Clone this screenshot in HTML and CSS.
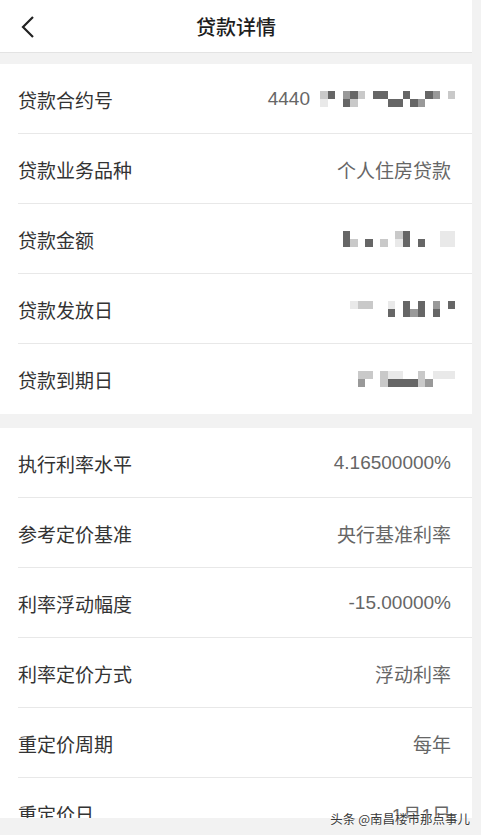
FILE: index.html
```html
<!DOCTYPE html>
<html lang="zh-CN">
	<head>
		<meta charset="UTF-8">
		<meta name="viewport" content="width=device-width, initial-scale=1.0">
		<title>贷款详情</title>
		<link rel="stylesheet" href="styles.css">
	</head>
	<body>
		<div class="page">
			<header class="topbar">
				<a class="back" href="#">
					<svg width="16" height="24" viewBox="0 0 16 24"><polyline points="13,2 3,12 13,22" fill="none" stroke="#222" stroke-width="2.2"/></svg>
				</a>
				<h1>贷款详情</h1>
			</header>

			<section class="card">
				<div class="row">
					<span class="label">贷款合约号</span>
					<span class="value">4440 <span class="mosaic" data-top="bd.cdb.dd..d..dc.b" data-bottom="a..db....dd.dc...."></span></span>
				</div>
				<div class="row">
					<span class="label">贷款业务品种</span>
					<span class="value">个人住房贷款</span>
				</div>
				<div class="row">
					<span class="label">贷款金额</span>
					<span class="value"><span class="mosaic" data-top="d......bd....aa" data-bottom="db.d.b.ad.d..aa"></span></span>
				</div>
				<div class="row">
					<span class="label">贷款发放日</span>
					<span class="value"><span class="mosaic" data-top="abb..a.d.d.c.d" data-bottom=".....d.dcd.d.."></span></span>
				</div>
				<div class="row">
					<span class="label">贷款到期日</span>
					<span class="value"><span class="mosaic" data-top="bb.baa..b.aaa" data-bottom="c..bddddbc..."></span></span>
				</div>
			</section>

			<section class="card">
				<div class="row">
					<span class="label">执行利率水平</span>
					<span class="value">4.16500000%</span>
				</div>
				<div class="row">
					<span class="label">参考定价基准</span>
					<span class="value">央行基准利率</span>
				</div>
				<div class="row">
					<span class="label">利率浮动幅度</span>
					<span class="value">-15.00000%</span>
				</div>
				<div class="row">
					<span class="label">利率定价方式</span>
					<span class="value">浮动利率</span>
				</div>
				<div class="row">
					<span class="label">重定价周期</span>
					<span class="value">每年</span>
				</div>
				<div class="row">
					<span class="label">重定价日</span>
					<span class="value">1月1日</span>
				</div>
			</section>
		</div>

		<div class="bottombar"></div>
		<div class="watermark">头条 @南昌楼市那点事儿</div>

		<script>
// masked values: two rows of blocks, one letter per block
const shades = { a: "#e9e9e9", b: "#c9c9c9", c: "#999", d: "#666" };

for (const m of document.querySelectorAll(".mosaic")) {
	const top = m.dataset.top;
	const bottom = m.dataset.bottom;
	for (let i = 0; i < top.length; i++) {
		for (const ch of [top[i], bottom[i] || "."]) {
			const cell = document.createElement("i");
			if (shades[ch]) cell.style.background = shades[ch];
			m.appendChild(cell);
		}
	}
}
		</script>
	</body>
</html>
```

FILE: styles.css
```css
body {
	margin: 0;
	height: 835px;
	overflow: hidden;
	background-color: #f2f2f2;
	font-family: "Liberation Sans", "Noto Sans CJK SC", sans-serif;
}

.page {
	width: 472px;
}

.topbar {
	position: relative;
	height: 52px;
	background-color: #fff;
	border-bottom: 1px solid #e3e3e3;
	display: flex;
	align-items: center;
	justify-content: center;
	margin-bottom: 11px;
}

.topbar h1 {
	margin: 0;
	font-size: 20px;
	font-weight: 500;
	color: #1e1e1e;
	font-family: "Noto Sans CJK SC", sans-serif;
}

.back {
	position: absolute;
	left: 20px;
	top: 15px;
	display: block;
	width: 16px;
	height: 24px;
}

.card {
	background-color: #fff;
	margin-bottom: 14px;
}

.row {
	position: relative;
	height: 70px;
	display: flex;
	align-items: center;
	justify-content: space-between;
	padding: 0 21px 0 18px;
	font-size: 19px;
}

.row::after {
	content: "";
	position: absolute;
	left: 18px;
	right: 0;
	bottom: 0;
	height: 1px;
	background-color: #e8e8e8;
}

.row:last-child::after {
	display: none;
}

.label {
	color: #333;
}

.value {
	color: #666;
	display: flex;
	align-items: center;
}

.mosaic {
	display: inline-grid;
	grid-template-rows: 8px 8px;
	grid-auto-flow: column;
	grid-auto-columns: 7.5px;
	margin-left: 10px;
	margin-right: -4px;
}

.bottombar {
	position: absolute;
	left: 0;
	right: 0;
	top: 818px;
	height: 17px;
	background-color: #f2f2f2;
}

.watermark {
	position: absolute;
	right: 11px;
	top: 809px;
	font-size: 12.5px;
	color: #3a3a3a;
	font-family: "Noto Sans CJK SC", sans-serif;
	text-shadow: 0 0 2px #fff, 0 0 2px #fff;
}
```
